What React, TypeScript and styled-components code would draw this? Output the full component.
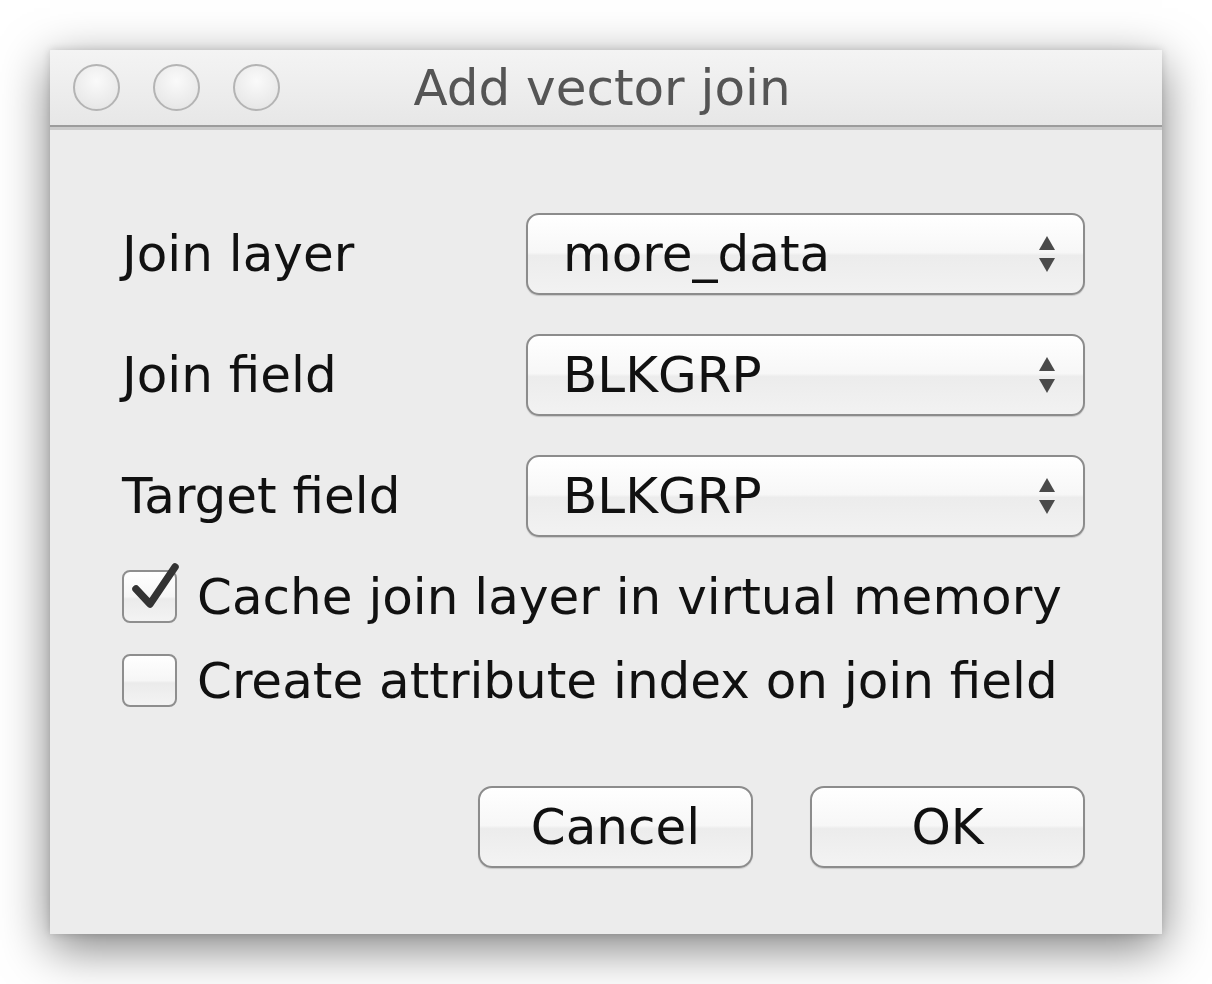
import { Fragment, useState } from 'react'
import styled, { createGlobalStyle } from 'styled-components'

const GlobalStyle = createGlobalStyle`
  html, body {
    margin: 0;
    padding: 0;
    background: #ffffff;
  }
  body {
    padding: 50px;
    font-family: "DejaVu Sans", "Liberation Sans", sans-serif;
  }
`

const Window = styled.div`
  width: 1112px;
  height: 884px;
  background: #ececec;
  box-shadow: 0 14px 46px rgba(0, 0, 0, 0.5), 0 0 8px rgba(0, 0, 0, 0.15);
  display: flex;
  flex-direction: column;
`

const TitleBar = styled.div`
  position: relative;
  height: 75px;
  display: flex;
  align-items: center;
  justify-content: center;
  background: linear-gradient(#f4f4f4, #e7e7e7);
  border-bottom: 2px solid #9c9c9c;
  box-shadow: 0 3px 0 #cbcbcb;
`

const Lights = styled.div`
  position: absolute;
  left: 23px;
  top: 14px;
  display: flex;
  gap: 33px;
`

const Light = styled.div`
  width: 43px;
  height: 43px;
  border-radius: 50%;
  border: 2.5px solid #b4b4b4;
  background: radial-gradient(circle at 50% 35%, #fafafa, #e2e2e2);
`

const Title = styled.div`
  font-size: 50px;
  color: #555555;
  margin-left: -8px;
`

const Body = styled.div`
  padding: 86px 77px 0 72px;
  display: flex;
  flex-direction: column;
`

const Form = styled.div`
  display: grid;
  grid-template-columns: 404px 559px;
  row-gap: 39px;
  align-items: center;
`

const Label = styled.div`
  font-size: 50px;
  color: #111111;
`

const Select = styled.div`
  position: relative;
  box-sizing: border-box;
  height: 82px;
  border: 2.5px solid #8c8c8c;
  border-radius: 13px;
  background: linear-gradient(#ffffff 0%, #f7f7f7 48%, #ececec 52%, #f2f2f2 100%);
  display: flex;
  align-items: center;
  padding-left: 35px;
  font-size: 50px;
  color: #111111;
  box-shadow: 0 1px 1px rgba(0, 0, 0, 0.15);
`

const Arrows = styled.svg`
  position: absolute;
  right: 25px;
  top: 50%;
  transform: translateY(-50%);
`

const Checks = styled.div`
  margin-top: 33px;
  display: flex;
  flex-direction: column;
  gap: 31px;
`

const CheckRow = styled.label`
  display: flex;
  align-items: center;
  gap: 20px;
  font-size: 50px;
  color: #111111;
  height: 53px;
  cursor: default;
`

const Box = styled.span`
  position: relative;
  box-sizing: border-box;
  width: 55px;
  height: 53px;
  border: 2.5px solid #8e8e8e;
  border-radius: 8px;
  background: linear-gradient(#ffffff 0%, #f6f6f6 50%, #ebebeb 55%, #f3f3f3 100%);
  flex-shrink: 0;
`

const Tick = styled.svg`
  position: absolute;
  left: -2.5px;
  top: -14.5px;
  overflow: visible;
`

const Buttons = styled.div`
  margin-top: 79px;
  display: flex;
  justify-content: flex-end;
  gap: 57px;
`

const Button = styled.button`
  box-sizing: border-box;
  width: 275px;
  height: 82px;
  border: 2.5px solid #8c8c8c;
  border-radius: 14px;
  background: linear-gradient(#ffffff 0%, #f7f7f7 48%, #ececec 52%, #f3f3f3 100%);
  font-family: "DejaVu Sans", "Liberation Sans", sans-serif;
  font-size: 50px;
  color: #111111;
  padding: 0;
  box-shadow: 0 1px 1px rgba(0, 0, 0, 0.15);
`

const Updown = () => (
  <Arrows width="22" height="42" viewBox="0 0 22 42">
    <path d="M11 3 L19 17 L3 17 Z" fill="#4a4a4a" />
    <path d="M3 25 L19 25 L11 39 Z" fill="#4a4a4a" />
  </Arrows>
)

const CheckMark = () => (
  <Tick width="64" height="60" viewBox="0 0 64 60">
    <path
      d="M14 31 L28 46 L53 9"
      fill="none"
      stroke="#333333"
      strokeWidth="7.5"
      strokeLinecap="round"
      strokeLinejoin="round"
    />
  </Tick>
)

const fields = [
  { label: 'Join layer', value: 'more_data' },
  { label: 'Join field', value: 'BLKGRP' },
  { label: 'Target field', value: 'BLKGRP' },
]

const App = () => {
  const [cache, setCache] = useState(true)
  const [index, setIndex] = useState(false)

  return (
    <>
      <GlobalStyle />
      <Window>
        <TitleBar>
          <Lights>
            <Light />
            <Light />
            <Light />
          </Lights>
          <Title>Add vector join</Title>
        </TitleBar>
        <Body>
          <Form>
            {fields.map((f) => (
              <Fragment key={f.label}>
                <Label>{f.label}</Label>
                <Select>
                  {f.value}
                  <Updown />
                </Select>
              </Fragment>
            ))}
          </Form>
          <Checks>
            <CheckRow onClick={() => setCache(!cache)}>
              <Box>{cache && <CheckMark />}</Box>
              Cache join layer in virtual memory
            </CheckRow>
            <CheckRow onClick={() => setIndex(!index)}>
              <Box>{index && <CheckMark />}</Box>
              Create attribute index on join field
            </CheckRow>
          </Checks>
          <Buttons>
            <Button>Cancel</Button>
            <Button>OK</Button>
          </Buttons>
        </Body>
      </Window>
    </>
  )
}

export default App
